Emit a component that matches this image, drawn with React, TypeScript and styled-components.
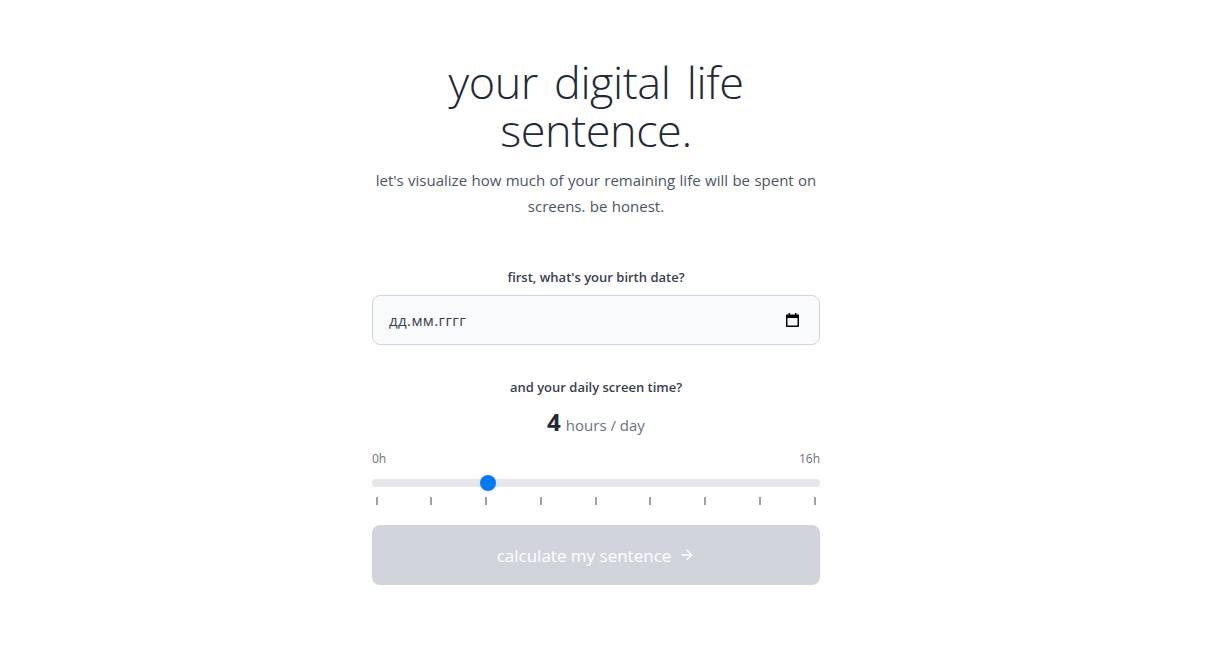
import { useState } from "react";
import styled, { createGlobalStyle } from "styled-components";
import { ArrowRight } from "lucide-react";

const GlobalStyle = createGlobalStyle`
  * { box-sizing: border-box; }
  html, body { margin: 0; padding: 0; background: #fff; }
  body { font-family: "Open Sans", "Noto Sans", sans-serif; }
`;

const Page = styled.main`
  display: flex;
  justify-content: center;
  min-height: 658px;
  padding: 58px 33px 0 0;
`;

const Column = styled.div`
  width: 448px;
  display: flex;
  flex-direction: column;
`;

const Header = styled.header`
  text-align: center;
  margin-bottom: 48px;
`;

const Title = styled.h1`
  margin: 0 0 13px;
  font-size: 45px;
  line-height: 48px;
  font-weight: 300;
  letter-spacing: -0.45px;
  word-spacing: 5px;
  color: #1f2937;
`;

const Subtitle = styled.p`
  margin: 0;
  font-size: 15px;
  line-height: 26px;
  word-spacing: 0.5px;
  color: #4b5563;
`;

const Field = styled.section<{ $gap: number }>`
  display: flex;
  flex-direction: column;
  margin-bottom: ${({ $gap }) => $gap}px;
`;

const Label = styled.label`
  text-align: center;
  font-size: 13px;
  line-height: 20px;
  font-weight: 600;
  color: #374151;
  margin-bottom: 8px;
`;

const DateBox = styled.div`
  height: 50px;
  display: flex;
  align-items: center;
  justify-content: space-between;
  padding: 0 20px 0 16px;
  background: #f9fafb;
  border: 1px solid #d1d5db;
  border-radius: 8px;
  font-size: 15px;
  letter-spacing: 0.4px;
  color: #374151;
`;

const HoursLine = styled.div`
  text-align: center;
  line-height: 32px;
  margin: 1px 0 10px;
  color: #6b7280;
  font-size: 15px;
`;

const HoursValue = styled.span`
  font-size: 24px;
  font-weight: 700;
  color: #1f2937;
  margin-right: 5px;
`;

const RangeLabels = styled.div`
  display: flex;
  justify-content: space-between;
  font-size: 12px;
  line-height: 16px;
  color: #6b7280;
  margin-bottom: 12px;
`;

const Slider = styled.input`
  appearance: none;
  display: block;
  width: 100%;
  height: 8px;
  margin: 0;
  border-radius: 8px;
  background: #e5e7eb;
  outline: none;

  &::-webkit-slider-thumb {
    appearance: none;
    width: 16px;
    height: 16px;
    border-radius: 50%;
    background: #007bff;
    border: none;
  }
`;

const Ticks = styled.div`
  display: flex;
  justify-content: space-between;
  padding: 10px 4.5px 0 3.5px;
`;

const Tick = styled.span`
  width: 2px;
  height: 8px;
  background: #9ca3af;
`;

const Submit = styled.button`
  height: 60px;
  display: flex;
  align-items: center;
  justify-content: center;
  gap: 8px;
  border: none;
  border-radius: 8px;
  background: #d1d5db;
  color: #fff;
  font-family: inherit;
  font-size: 17px;
  font-weight: 400;
`;

function CalendarIcon() {
  return (
    <svg width="13" height="14" viewBox="0 0 13 14" aria-hidden="true">
      <path
        d="M2.500 0h1.500v1.500h5V0h1.500v1.500h1.200A.800.800 0 0 1 13 2.300v10.900a.800.800 0 0 1-.800.800H.800a.800.800 0 0 1-.800-.800V2.300a.800.800 0 0 1 .800-.800h1.700V0ZM1.500 5v7.500h10V5h-10Z"
        fill="#000"
        fillRule="evenodd"
      />
    </svg>
  );
}

export default function App() {
  const [hours, setHours] = useState(4);

  return (
    <Page>
      <GlobalStyle />
      <Column>
        <Header>
          <Title>your digital life sentence.</Title>
          <Subtitle>let's visualize how much of your remaining life will be spent on screens. be honest.</Subtitle>
        </Header>

        <Field $gap={32}>
          <Label>first, what's your birth date?</Label>
          <DateBox>
            <span>дд.мм.гггг</span>
            <CalendarIcon />
          </DateBox>
        </Field>

        <Field $gap={20}>
          <Label>and your daily screen time?</Label>
          <HoursLine>
            <HoursValue>{hours}</HoursValue>hours / day
          </HoursLine>
          <RangeLabels>
            <span>0h</span>
            <span>16h</span>
          </RangeLabels>
          <Slider type="range" min={0} max={16} value={hours} onChange={(e) => setHours(Number(e.target.value))} />
          <Ticks>
            {Array.from({ length: 9 }, (_, i) => (
              <Tick key={i} />
            ))}
          </Ticks>
        </Field>

        <Submit type="button" disabled>
          calculate my sentence
          <ArrowRight size={16} strokeWidth={2} />
        </Submit>
      </Column>
    </Page>
  );
}
